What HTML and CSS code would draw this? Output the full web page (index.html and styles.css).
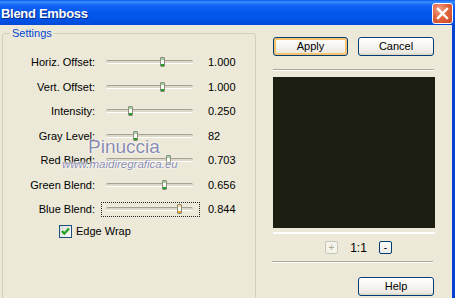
FILE: index.html
```html
<!DOCTYPE html>
<html>
<head>
<meta charset="utf-8">
<link rel="stylesheet" href="styles.css">
</head>
<body>
<div class="window">
  <div class="titlebar">
    <span class="title">Blend Emboss</span>
    <span class="close"><svg width="13" height="13" viewBox="0 0 13 13"><path d="M2 2 L11 11 M11 2 L2 11" stroke="#fff" stroke-width="2.4" stroke-linecap="square"/></svg></span>
  </div>
  <div class="client">
    <fieldset class="group">
      <legend>Settings</legend>
      <div class="rows">
        <span class="lbl">Horiz. Offset:</span>
        <div class="slider"><div class="track"><span class="thumb" style="left:54px"></span></div></div>
        <span class="val">1.000</span>

        <span class="lbl">Vert. Offset:</span>
        <div class="slider"><div class="track"><span class="thumb" style="left:54px"></span></div></div>
        <span class="val">1.000</span>

        <span class="lbl">Intensity:</span>
        <div class="slider"><div class="track"><span class="thumb" style="left:22px"></span></div></div>
        <span class="val">0.250</span>

        <span class="lbl">Gray Level:</span>
        <div class="slider"><div class="track"><span class="thumb" style="left:27px"></span></div></div>
        <span class="val">82</span>

        <span class="lbl">Red Blend:</span>
        <div class="slider"><div class="track"><span class="thumb" style="left:60px"></span></div></div>
        <span class="val">0.703</span>

        <span class="lbl">Green Blend:</span>
        <div class="slider"><div class="track"><span class="thumb" style="left:56px"></span></div></div>
        <span class="val">0.656</span>

        <span class="lbl">Blue Blend:</span>
        <div class="slider focus"><div class="track"><span class="thumb hot" style="left:71px"></span></div></div>
        <span class="val">0.844</span>
      </div>
      <div class="check">
        <span class="box"><svg width="11" height="11" viewBox="0 0 11 11"><path d="M2 5 L4.3 7.6 L9 2.6" fill="none" stroke="#21a121" stroke-width="2.2"/></svg></span>
        <span>Edge Wrap</span>
      </div>
    </fieldset>
    <div class="side">
      <div class="btnrow">
        <span class="btn default">Apply</span>
        <span class="btn wide">Cancel</span>
      </div>
      <div class="sep"></div>
      <div class="preview"><div class="img"></div></div>
      <div class="zoomrow">
        <span class="mini disabled">+</span>
        <span class="ratio">1:1</span>
        <span class="mini">-</span>
      </div>
      <div class="sep sep2"></div>
      <div class="helprow"><span class="btn wide">Help</span></div>
    </div>
    <div class="wm wm1">Pinuccia</div>
    <div class="wm wm2">www.maidiregrafica.eu</div>
  </div>
</div>
</body>
</html>
```
FILE: styles.css
```css
html, body {
  margin: 0;
  padding: 0;
}
body {
  width: 455px;
  height: 298px;
  overflow: hidden;
  font: 11px "Liberation Sans", Arial, sans-serif;
  color: #000;
}
.window {
  width: 455px;
  height: 298px;
  display: flex;
  flex-direction: column;
  background: #0842d0;
}
.titlebar {
  height: 25px;
  flex: none;
  display: flex;
  align-items: center;
  justify-content: space-between;
  padding: 0 2px 0 1px;
  background: linear-gradient(to bottom, #0a5cf0 0%, #3c8ffc 8%, #1465f5 20%, #0658ee 45%, #0055e8 75%, #0049d8 100%);
}
.title {
  color: #fff;
  font-weight: bold;
  font-size: 13px;
  letter-spacing: -0.3px;
  text-shadow: 1px 1px 0 #0b2a86;
  margin-top: 2px;
}
.close {
  box-sizing: border-box;
  width: 21px;
  height: 21px;
  border: 1px solid #fff;
  border-radius: 3px;
  background: radial-gradient(circle at 35% 30%, #f2a38a 0%, #e2643f 45%, #c8461f 100%);
  display: flex;
  align-items: center;
  justify-content: center;
  margin-top: 1px;
}
.client {
  flex: 1;
  margin-right: 3px;
  background: #ece9d8;
  display: flex;
  position: relative;
  overflow: hidden;
}
.group {
  box-sizing: border-box;
  flex: none;
  width: 254px;
  height: 300px;
  margin: 2px 0 0 2px;
  padding: 10px 0 0 0;
  border: 1px solid #d0d0bf;
  border-radius: 3px;
  min-width: 0;
}
.group legend {
  color: #0046d5;
  padding: 0 2px;
  margin-left: 7px;
  line-height: 13px;
}
.rows {
  display: grid;
  grid-template-columns: 92px 99px 1fr;
  grid-auto-rows: 24.5px;
  column-gap: 6px;
  align-items: center;
}
.lbl {
  text-align: right;
  white-space: nowrap;
}
.val {
  padding-left: 2px;
}
.slider {
  box-sizing: border-box;
  height: 15px;
  display: flex;
  align-items: center;
  padding: 0 7px 0 5px;
}
.slider.focus {
  outline: 1px dotted #222;
  outline-offset: -1px;
}
.track {
  flex: 1;
  height: 2px;
  position: relative;
  border-top: 1px solid #a5a295;
  border-bottom: 1px solid #fff;
  border-radius: 2px;
  background: #dcd9c9;
}
.thumb {
  position: absolute;
  top: -4px;
  box-sizing: border-box;
  width: 5px;
  height: 10px;
  border: 1px solid #8b8b80;
  border-radius: 1px;
  background: linear-gradient(to bottom, #9ed49c 0, #9ed49c 2px, #fbfbf8 2px, #fbfbf8 6px, #21a121 6px);
}
.thumb.hot {
  background: linear-gradient(to bottom, #f9d58c 0, #f9d58c 2px, #fbfbf8 2px, #fbfbf8 6px, #e8a221 6px);
}
.check {
  display: flex;
  align-items: center;
  gap: 4px;
  margin: 3px 0 0 56px;
  height: 13px;
}
.box {
  box-sizing: border-box;
  width: 13px;
  height: 13px;
  border: 1px solid #1c5180;
  background: linear-gradient(135deg, #dcdcd7, #fbfbf9);
  display: flex;
  align-items: center;
  justify-content: center;
}
.side {
  flex: none;
  width: 162px;
  margin: 12px 0 0 17px;
  display: flex;
  flex-direction: column;
}
.btnrow {
  display: flex;
  justify-content: space-between;
  width: 161px;
}
.btn {
  box-sizing: border-box;
  height: 19px;
  width: 75px;
  border: 1px solid #003c74;
  border-radius: 3px;
  background: linear-gradient(to bottom, #ffffff 0%, #f5f4ef 50%, #ebe9e1 85%, #d8d3c6 100%);
  display: flex;
  align-items: center;
  justify-content: center;
  font-size: 11px;
  line-height: 1;
}
.btn.wide {
  width: 76px;
}
.btn.default {
  box-shadow: inset 0 0 0 2px #f7c36b;
}
.sep {
  width: 161px;
  height: 1px;
  border-top: 1px solid #aca899;
  background: #fff;
  margin-top: 13px;
}
.preview {
  margin-top: 6px;
  padding-bottom: 4px;
  border-bottom: 2px solid #fff;
}
.img {
  height: 151px;
  background: #1b1e11;
}
.zoomrow {
  display: flex;
  align-items: center;
  height: 13px;
  margin-top: 7px;
  padding-left: 52px;
}
.mini {
  box-sizing: border-box;
  width: 13px;
  height: 13px;
  border: 1px solid #003c74;
  border-radius: 2px;
  background: linear-gradient(to bottom, #fff, #ecebe6);
  display: flex;
  align-items: center;
  justify-content: center;
  font-size: 10px;
  line-height: 1;
}
.mini.disabled {
  border-color: #c9c7ba;
  color: #aca899;
  background: #f5f4ea;
}
.ratio {
  width: 41px;
  text-align: center;
  font-size: 12px;
}
.sep2 {
  margin-top: 7px;
  margin-left: -1px;
}
.helprow {
  display: flex;
  justify-content: flex-end;
  width: 161px;
  margin-top: 14px;
}
.wm {
  position: absolute;
  color: #8a8cae;
  white-space: nowrap;
  text-shadow: 0 0 2px #fff, 0 0 2px #fff, 0 0 1px #fff;
}
.wm1 {
  left: 88px;
  top: 112px;
  font-size: 19px;
  line-height: 19px;
}
.wm2 {
  left: 62px;
  top: 133px;
  font-size: 11.5px;
  line-height: 12px;
  font-style: italic;
}
```
